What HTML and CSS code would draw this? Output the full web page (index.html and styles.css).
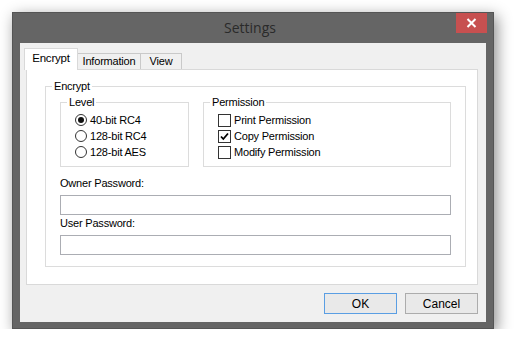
FILE: index.html
```html
<!DOCTYPE html>
<html>
<head>
<meta charset="UTF-8">
<title>Settings</title>
<link rel="stylesheet" href="styles.css">
</head>
<body>
	<div class="fenetre">
		<div class="barre_titre">
			<span></span>
			<div class="titre">Settings</div>
			<div class="fermer">
				<svg width="11" height="10" viewBox="0 0 11 10"><path d="M1.5 1 L9.5 9 M9.5 1 L1.5 9" stroke="#fff" stroke-width="2"/></svg>
			</div>
		</div>

		<div class="client">
			<div class="onglets">
				<div class="onglet onglet_actif">Encrypt</div>
				<div class="onglet onglet_info">Information</div>
				<div class="onglet onglet_vue">View</div>
			</div>

			<div class="page_onglet">
				<fieldset class="groupe groupe_encrypt">
					<legend>Encrypt</legend>
					<div class="ligne_groupes">
						<fieldset class="groupe groupe_level">
							<legend>Level</legend>
							<label class="option"><span class="radio radio_coche"></span>40-bit RC4</label>
							<label class="option"><span class="radio"></span>128-bit RC4</label>
							<label class="option"><span class="radio"></span>128-bit AES</label>
						</fieldset>
						<fieldset class="groupe groupe_permission">
							<legend>Permission</legend>
							<label class="option"><span class="case"></span>Print Permission</label>
							<label class="option"><span class="case"><svg width="11" height="11" viewBox="0 0 11 11"><path d="M2 5.5 L4.3 8 L9 2.5" stroke="#000" stroke-width="1.8" fill="none"/></svg></span>Copy Permission</label>
							<label class="option"><span class="case"></span>Modify Permission</label>
						</fieldset>
					</div>

					<div class="champ champ_premier">
						<div class="etiquette">Owner Password:</div>
						<div class="zone_texte"></div>
					</div>
					<div class="champ">
						<div class="etiquette">User Password:</div>
						<div class="zone_texte"></div>
					</div>
				</fieldset>
			</div>

			<div class="boutons">
				<button class="bouton bouton_defaut">OK</button>
				<button class="bouton">Cancel</button>
			</div>
		</div>
	</div>
</body>
</html>
```

FILE: styles.css
```css
html, body
{
	margin : 0;
	background : #fff;
}

body
{
	font : 11px "Liberation Sans", Arial, sans-serif;
	letter-spacing : -0.2px;
	color : #000;
}

.fenetre
{
	margin : 12px 0 0 12px;
	width : 480px;
	height : 315px;
	border : 1px solid #555;
	background : #656565;
	display : flex;
	flex-direction : column;
	box-shadow : 3px 4px 14px rgba(0,0,0,0.45);
}

.barre_titre
{
	height : 30px;
	display : grid;
	grid-template-columns : 1fr auto 1fr;
	align-items : center;
	padding-right : 6px;
}

.titre
{
	font : 14px "Open Sans", "Noto Sans", sans-serif;
	letter-spacing : 0;
	color : #2a2a2a;
	margin-top : -1px;
}

.fermer
{
	justify-self : end;
	align-self : start;
	width : 31px;
	height : 20px;
	background : #c75050;
	display : flex;
	align-items : center;
	justify-content : center;
}

.client
{
	flex : 1;
	margin : 0 7px 6px 7px;
	padding : 6px 8px 8px 6px;
	background : #f0f0f0;
	display : flex;
	flex-direction : column;
}

/* onglets */

.onglets
{
	height : 21px;
	display : flex;
	align-items : flex-end;
	margin-left : -2px;
	margin-bottom : -1px;
}

.onglet
{
	height : 16px;
	line-height : 15px;
	border : 1px solid #c9c9c9;
	border-bottom : none;
	background : #f0f0f0;
	text-align : center;
	margin-left : -1px;
}

.onglet_actif
{
	height : 21px;
	line-height : 18px;
	width : 52px;
	margin-left : 0;
	background : #fff;
	border-color : #d9d9d9;
	position : relative;
	z-index : 1;
	font-size : 11.5px;
}

.onglet_info
{
	width : 62px;
}

.onglet_vue
{
	width : 40px;
}

.page_onglet
{
	flex : 1;
	background : #fff;
	border : 1px solid #d9d9d9;
	padding : 10px 11px 0 18px;
}

/* cadres */

.groupe
{
	margin : 0;
	padding : 0;
	border : 1px solid #dcdcdc;
	min-width : 0;
}

.groupe legend
{
	font : inherit;
	line-height : 13px;
	padding : 0 2px;
}

.groupe_encrypt
{
	padding : 3px 14px 11px 14px;
}

.groupe_encrypt > legend
{
	margin-left : -8px;
}

.ligne_groupes
{
	display : flex;
	gap : 14px;
}

.groupe_level
{
	width : 129px;
	box-sizing : border-box;
	padding : 3px 0 6px 13px;
}

.groupe_permission
{
	flex : 1;
	padding : 3px 0 6px 13px;
}

.groupe_level > legend, .groupe_permission > legend
{
	margin-left : -7px;
}

.option
{
	display : flex;
	align-items : center;
	height : 16px;
	gap : 3px;
}

.radio
{
	width : 10px;
	height : 10px;
	border : 1px solid #333;
	border-radius : 50%;
	background : #fff;
	display : flex;
	align-items : center;
	justify-content : center;
	margin-left : 1px;
}

.radio_coche::after
{
	content : "";
	width : 6px;
	height : 6px;
	border-radius : 50%;
	background : #111;
}

.case
{
	width : 11px;
	height : 11px;
	border : 1px solid #333;
	background : #fff;
	display : flex;
	align-items : center;
	justify-content : center;
	margin-left : 1px;
}

/* mots de passe */

.champ
{
	margin-top : 2px;
}

.champ_premier
{
	margin-top : 10px;
}

.etiquette
{
	line-height : 13px;
	margin-bottom : 5px;
}

.zone_texte
{
	height : 18px;
	border : 1px solid #abadb3;
	background : #fff;
}

/* boutons */

.boutons
{
	display : flex;
	justify-content : flex-end;
	gap : 8px;
	margin-top : 8px;
}

.bouton
{
	font : 12px "Liberation Sans", Arial, sans-serif;
	width : 73px;
	height : 21px;
	padding : 0;
	border : 1px solid #acacac;
	background : #e9e9e9;
	color : #000;
}

.bouton_defaut
{
	border-color : #5a9ee3;
}
```
